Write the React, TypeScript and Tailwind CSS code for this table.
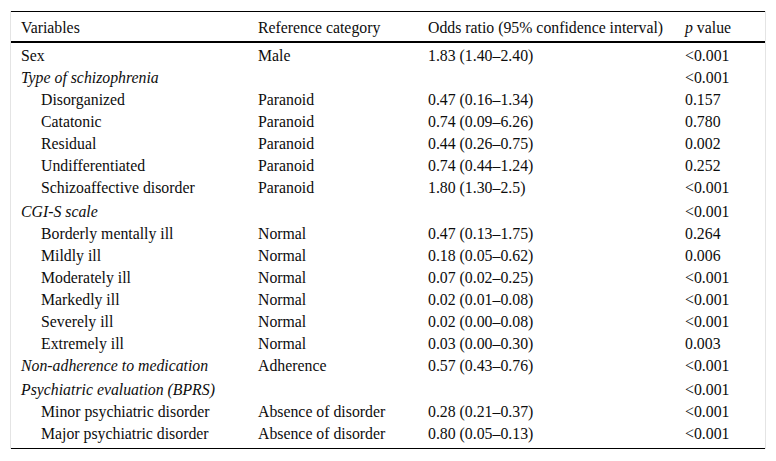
import React from "react";

type Row = {
  v: string;
  kind: "plain" | "group" | "sub";
  ref?: string;
  or?: string;
  p?: string;
  tall?: boolean;
};

const rows: Row[] = [
  { v: "Sex", kind: "plain", ref: "Male", or: "1.83 (1.40–2.40)", p: "<0.001" },
  { v: "Type of schizophrenia", kind: "group", p: "<0.001" },
  { v: "Disorganized", kind: "sub", ref: "Paranoid", or: "0.47 (0.16–1.34)", p: "0.157" },
  { v: "Catatonic", kind: "sub", ref: "Paranoid", or: "0.74 (0.09–6.26)", p: "0.780" },
  { v: "Residual", kind: "sub", ref: "Paranoid", or: "0.44 (0.26–0.75)", p: "0.002" },
  { v: "Undifferentiated", kind: "sub", ref: "Paranoid", or: "0.74 (0.44–1.24)", p: "0.252" },
  { v: "Schizoaffective disorder", kind: "sub", ref: "Paranoid", or: "1.80 (1.30–2.5)", p: "<0.001" },
  { v: "CGI-S scale", kind: "group", p: "<0.001", tall: true },
  { v: "Borderly mentally ill", kind: "sub", ref: "Normal", or: "0.47 (0.13–1.75)", p: "0.264" },
  { v: "Mildly ill", kind: "sub", ref: "Normal", or: "0.18 (0.05–0.62)", p: "0.006" },
  { v: "Moderately ill", kind: "sub", ref: "Normal", or: "0.07 (0.02–0.25)", p: "<0.001" },
  { v: "Markedly ill", kind: "sub", ref: "Normal", or: "0.02 (0.01–0.08)", p: "<0.001" },
  { v: "Severely ill", kind: "sub", ref: "Normal", or: "0.02 (0.00–0.08)", p: "<0.001" },
  { v: "Extremely ill", kind: "sub", ref: "Normal", or: "0.03 (0.00–0.30)", p: "0.003" },
  { v: "Non-adherence to medication", kind: "group", ref: "Adherence", or: "0.57 (0.43–0.76)", p: "<0.001" },
  { v: "Psychiatric evaluation (BPRS)", kind: "group", p: "<0.001", tall: true },
  { v: "Minor psychiatric disorder", kind: "sub", ref: "Absence of disorder", or: "0.28 (0.21–0.37)", p: "<0.001" },
  { v: "Major psychiatric disorder", kind: "sub", ref: "Absence of disorder", or: "0.80 (0.05–0.13)", p: "<0.001" },
];

export default function App() {
  return (
    <div
      className="bg-white w-[776px] h-[461px] pt-[11px] pl-[10px] text-[15.8px] text-[#0d0d0d] leading-none"
      style={{ fontFamily: '"Liberation Serif", "Times New Roman", serif' }}
    >
      <div className="w-[756px] border-x border-[#e4e4e4]">
        <div className="border-t border-black">
          <div className="grid grid-cols-[247px_170px_257px_80px] h-[31px] pt-[3px] items-center border-b-2 border-black">
            <div className="pl-[10px]">Variables</div>
            <div>Reference category</div>
            <div>Odds ratio (95% confidence interval)</div>
            <div>
              <span className="italic">p</span> value
            </div>
          </div>
          <div className="pb-[5px] border-b border-black">
            {rows.map((r, i) => (
              <div
                key={i}
                className={`grid grid-cols-[247px_170px_257px_80px] items-center ${
                  r.tall ? "h-[24px] pt-[5px]" : "h-[22px] pt-[3px]"
                }`}
              >
                <div
                  className={
                    r.kind === "sub"
                      ? "pl-[30px]"
                      : r.kind === "group"
                      ? "pl-[10px] italic"
                      : "pl-[10px]"
                  }
                >
                  {r.v}
                </div>
                <div>{r.ref ?? ""}</div>
                <div>{r.or ?? ""}</div>
                <div>{r.p ?? ""}</div>
              </div>
            ))}
          </div>
        </div>
      </div>
    </div>
  );
}
